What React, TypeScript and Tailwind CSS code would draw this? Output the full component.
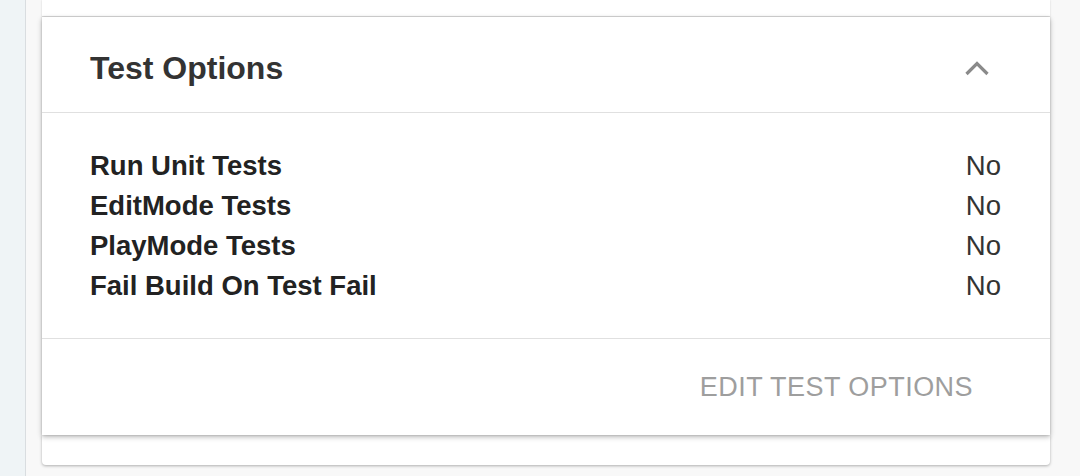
const rows = [
  { label: "Run Unit Tests", value: "No" },
  { label: "EditMode Tests", value: "No" },
  { label: "PlayMode Tests", value: "No" },
  { label: "Fail Build On Test Fail", value: "No" },
];

const ChevronUp = () => (
  <svg width="24" height="16" viewBox="0 0 24 16" fill="none">
    <path d="M1.5 14 L12 3.5 L22.5 14" stroke="#8a8a8a" strokeWidth="3.2" />
  </svg>
);

export default function App() {
  return (
    <div
      className="flex h-[476px] w-full overflow-hidden bg-[#eff4f6]"
      style={{ fontFamily: '"Liberation Sans", Arial, sans-serif' }}
    >
      <div className="w-[26px] shrink-0 border-r border-[#d9dde0]" />

      <div className="flex-1 bg-[#f8f8f8] pl-[16px] pr-[30px]">
        <div className="h-[17px] border-b border-[#e2e2e2] bg-white shadow-[0_0_2px_rgba(0,0,0,0.15)]" />

        <div className="relative z-10 bg-white shadow-[0_2px_5px_rgba(0,0,0,0.28),0_0_2px_rgba(0,0,0,0.2)]">
          <div className="flex h-[96px] items-center justify-between border-b border-[#e0e0e0] pl-[48px] pr-[61px] pt-[6px]">
            <span className="text-[32px] font-bold text-[#333333]">
              Test Options
            </span>
            <ChevronUp />
          </div>

          <div className="border-b border-[#e0e0e0] pb-[32px] pl-[48px] pr-[49px] pt-[33px]">
            {rows.map((row) => (
              <div
                key={row.label}
                className="flex items-center justify-between text-[27.5px] leading-[40px]"
              >
                <span className="font-bold text-[#222222]">{row.label}</span>
                <span className="text-[#333333]">{row.value}</span>
              </div>
            ))}
          </div>

          <div className="flex h-[96px] items-center justify-end pr-[77px]">
            <button className="text-[27px] tracking-[0.45px] text-[#9e9e9e]">
              EDIT TEST OPTIONS
            </button>
          </div>
        </div>

        <div className="h-[30px] rounded-b-[4px] bg-white shadow-[0_1px_3px_rgba(0,0,0,0.3)]" />
      </div>
    </div>
  );
}
